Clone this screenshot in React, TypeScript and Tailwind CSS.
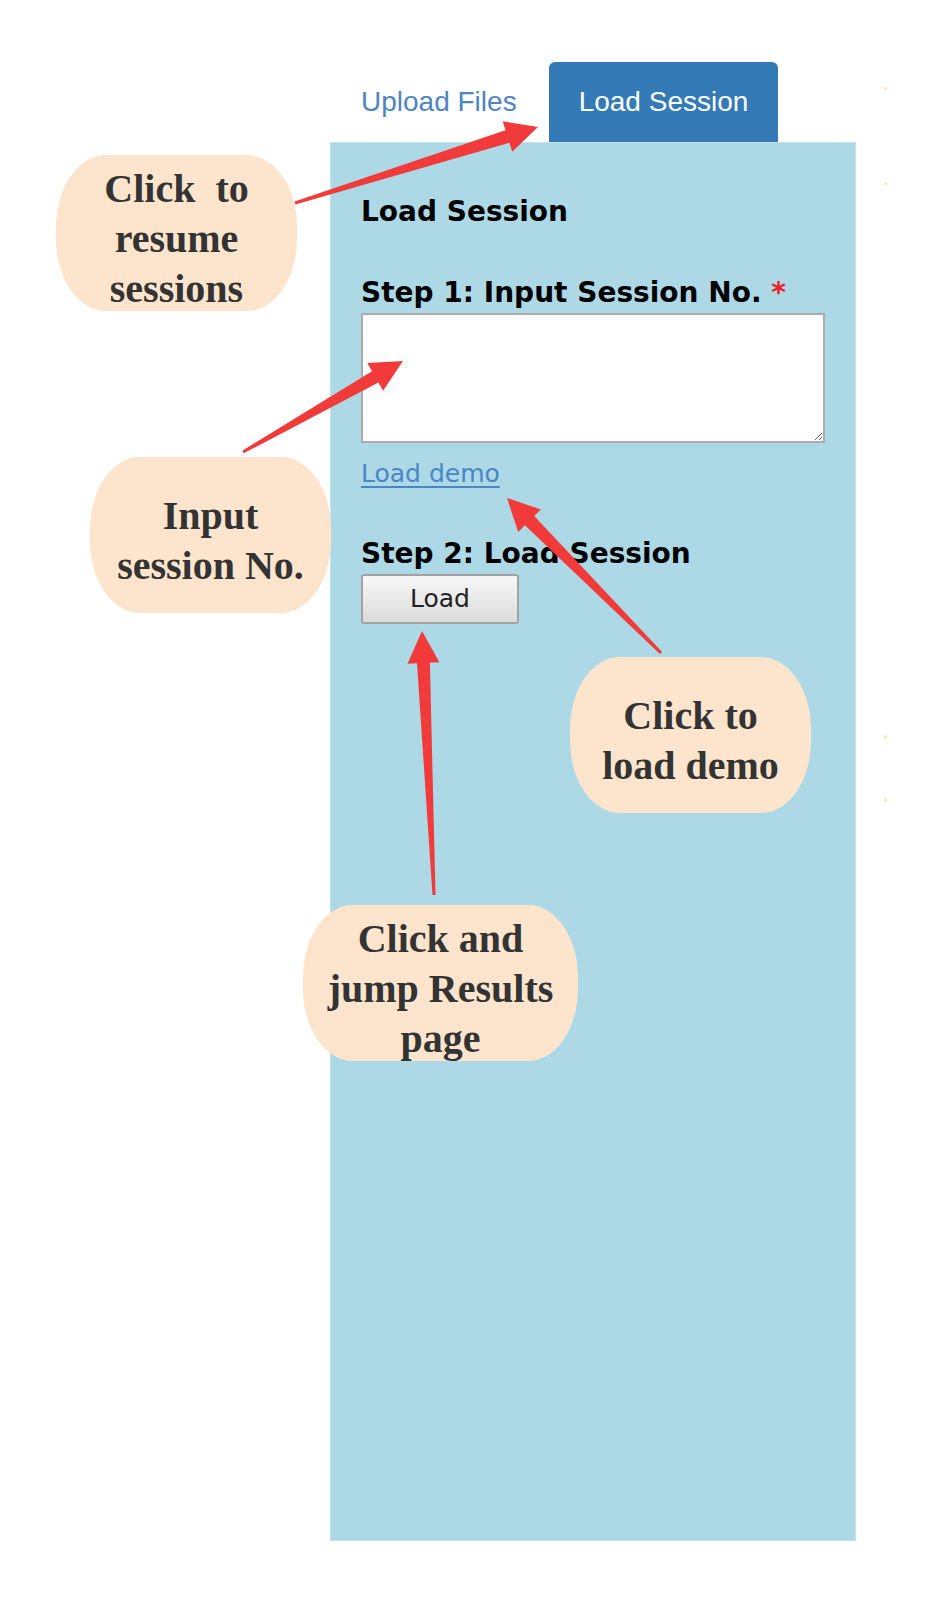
import React from 'react';

type Pt = [number, number];

// tapered annotation arrow: thin at the tail, wide at the neck, solid head
function arrowPoints(tail: Pt, tip: Pt, headLen: number, headHalf: number, tailW: number, neckW: number) {
  const dx = tip[0] - tail[0];
  const dy = tip[1] - tail[1];
  const len = Math.hypot(dx, dy);
  const ux = dx / len;
  const uy = dy / len;
  const nx = -uy;
  const ny = ux;
  const neck: Pt = [tip[0] - ux * headLen, tip[1] - uy * headLen];
  const pts: Pt[] = [
    [tail[0] + nx * tailW / 2, tail[1] + ny * tailW / 2],
    [neck[0] + nx * neckW / 2, neck[1] + ny * neckW / 2],
    [neck[0] + nx * headHalf, neck[1] + ny * headHalf],
    tip,
    [neck[0] - nx * headHalf, neck[1] - ny * headHalf],
    [neck[0] - nx * neckW / 2, neck[1] - ny * neckW / 2],
    [tail[0] - nx * tailW / 2, tail[1] - ny * tailW / 2],
  ];
  return pts.map((p) => `${p[0].toFixed(1)},${p[1].toFixed(1)}`).join(' ');
}

const arrows: { tail: Pt; tip: Pt }[] = [
  { tail: [295, 203], tip: [538, 127] },
  { tail: [243, 452], tip: [403, 361] },
  { tail: [661, 653], tip: [507, 498] },
  { tail: [434, 895], tip: [422, 631] },
];

function Arrows() {
  return (
    <svg className="absolute left-0 top-0 pointer-events-none" width={936} height={1620} viewBox="0 0 936 1620">
      {arrows.map((a, i) => (
        <polygon key={i} points={arrowPoints(a.tail, a.tip, 32, 16, 3, 13)} fill="#f13b3b" />
      ))}
    </svg>
  );
}

function Callout({ className, children }: { className: string; children: React.ReactNode }) {
  return (
    <div
      className={`absolute flex flex-col items-center rounded-[50px_/_72px] bg-[#fde5cd] text-center font-['Liberation_Serif',serif] text-[40px] font-bold leading-[50px] text-[#333333] ${className}`}
    >
      {children}
    </div>
  );
}

export default function App() {
  return (
    <div className="relative h-[1620px] w-[936px] overflow-hidden bg-white">
      <div className="pl-[330px] pt-[62px]">
        {/* tabs */}
        <div className="flex h-[80px] font-['Liberation_Sans',Arial,sans-serif] text-[28px]">
          <div className="flex items-center pl-[31px] pr-[32px] text-[#4f84c4]">Upload Files</div>
          <div className="flex items-center rounded-t-[6px] bg-[#337ab7] px-[30px] text-white">Load Session</div>
        </div>

        {/* panel */}
        <div className="h-[1399px] w-[526px] border border-[#c4e3ec] bg-[#add8e6] pl-[30px] pr-[30px] pt-[53px] font-['DejaVu_Sans',Verdana,sans-serif]">
          <h3 className="text-[28px] font-bold leading-[32px] text-black">Load Session</h3>

          <div className="mt-[49px] text-[28px] font-bold leading-[32px] text-black">
            Step 1: Input Session No. <span className="text-[#ee1c25]">*</span>
          </div>
          <textarea className="mt-[4px] block h-[130px] w-[464px] border-2 border-[#ababab] bg-white" />

          <a className="mt-[16px] block w-fit text-[25px] leading-[30px] text-[#4a86c6] underline decoration-[2px] underline-offset-[4px]">
            Load demo
          </a>

          <div className="mt-[49px] text-[28px] font-bold leading-[32px] text-black">Step 2: Load Session</div>
          <button className="mt-[4px] flex h-[50px] w-[158px] items-center justify-center rounded-[3px] border-2 border-[#a3a3a3] bg-gradient-to-b from-[#f7f7f7] to-[#dcdcdc] text-[25px] text-[#222]">
            Load
          </button>
        </div>
      </div>

      {/* faint specks at the right edge */}
      <span className="absolute left-[884px] top-[87px] h-[3px] w-[3px] rounded-full bg-[#fbe6a6]" />
      <span className="absolute left-[884px] top-[182px] h-[3px] w-[3px] rounded-full bg-[#fbe6a6]" />
      <span className="absolute left-[884px] top-[735px] h-[4px] w-[3px] rounded-full bg-[#fbe6a6]" />
      <span className="absolute left-[884px] top-[798px] h-[4px] w-[3px] rounded-full bg-[#fbe6a6]" />

      <Arrows />

      <Callout className="left-[56px] top-[155px] h-[156px] w-[241px] pt-[9px]">
        <span>Click{'\u00a0\u00a0'}to</span>
        <span>resume</span>
        <span>sessions</span>
      </Callout>
      <Callout className="left-[90px] top-[457px] h-[156px] w-[241px] justify-center pt-[12px]">
        <span>Input</span>
        <span>session No.</span>
      </Callout>
      <Callout className="left-[570px] top-[657px] h-[156px] w-[241px] justify-center pt-[12px]">
        <span>Click to</span>
        <span>load demo</span>
      </Callout>
      <Callout className="left-[303px] top-[905px] h-[156px] w-[275px] pt-[9px]">
        <span>Click and</span>
        <span>jump Results</span>
        <span>page</span>
      </Callout>
    </div>
  );
}
